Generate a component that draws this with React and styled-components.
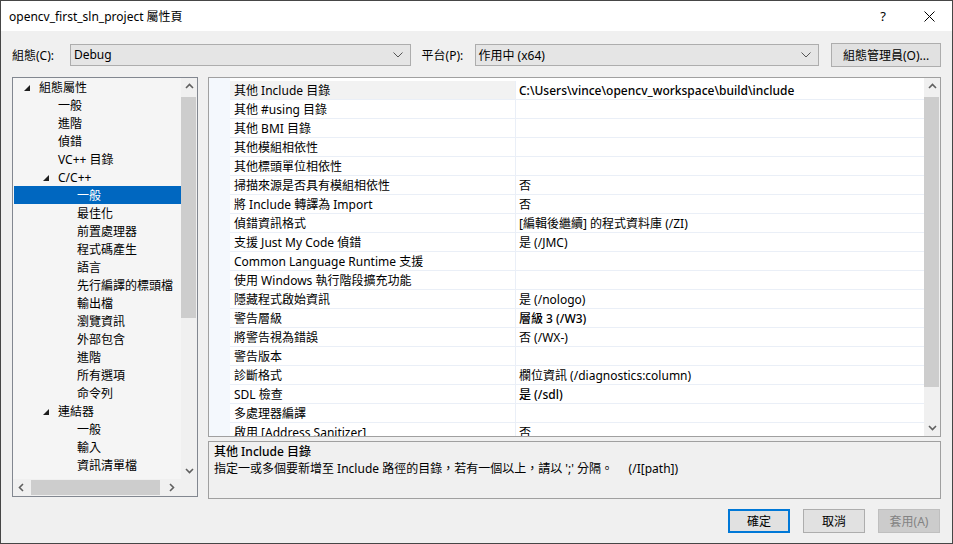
import React from 'react'
import styled, { createGlobalStyle } from 'styled-components'

const treeItems = [
  { label: '組態屬性', level: 0, expanded: true },
  { label: '一般', level: 1 },
  { label: '進階', level: 1 },
  { label: '偵錯', level: 1 },
  { label: 'VC++ 目錄', level: 1 },
  { label: 'C/C++', level: 1, expanded: true },
  { label: '一般', level: 2, selected: true },
  { label: '最佳化', level: 2 },
  { label: '前置處理器', level: 2 },
  { label: '程式碼產生', level: 2 },
  { label: '語言', level: 2 },
  { label: '先行編譯的標頭檔', level: 2 },
  { label: '輸出檔', level: 2 },
  { label: '瀏覽資訊', level: 2 },
  { label: '外部包含', level: 2 },
  { label: '進階', level: 2 },
  { label: '所有選項', level: 2 },
  { label: '命令列', level: 2 },
  { label: '連結器', level: 1, expanded: true },
  { label: '一般', level: 2 },
  { label: '輸入', level: 2 },
  { label: '資訊清單檔', level: 2 },
]

const properties = [
  { name: '其他 Include 目錄', value: 'C:\\Users\\vince\\opencv_workspace\\build\\include', bold: true, selected: true },
  { name: '其他 #using 目錄', value: '' },
  { name: '其他 BMI 目錄', value: '' },
  { name: '其他模組相依性', value: '' },
  { name: '其他標頭單位相依性', value: '' },
  { name: '掃描來源是否具有模組相依性', value: '否' },
  { name: '將 Include 轉譯為 Import', value: '否' },
  { name: '偵錯資訊格式', value: '[編輯後繼續] 的程式資料庫 (/ZI)' },
  { name: '支援 Just My Code 偵錯', value: '是 (/JMC)' },
  { name: 'Common Language Runtime 支援', value: '' },
  { name: '使用 Windows 執行階段擴充功能', value: '' },
  { name: '隱藏程式啟始資訊', value: '是 (/nologo)' },
  { name: '警告層級', value: '層級 3 (/W3)', bold: true },
  { name: '將警告視為錯誤', value: '否 (/WX-)' },
  { name: '警告版本', value: '' },
  { name: '診斷格式', value: '欄位資訊 (/diagnostics:column)' },
  { name: 'SDL 檢查', value: '是 (/sdl)', bold: true },
  { name: '多處理器編譯', value: '' },
  { name: '啟用 [Address Sanitizer]', value: '否' },
]

const rotation = { up: 0, right: 90, down: 180, left: 270 }

function Chevron({ dir }) {
  return (
    <svg width="9" height="9" viewBox="0 0 9 9" style={{ transform: `rotate(${rotation[dir]}deg)` }}>
      <polyline points="1,6 4.5,2.5 8,6" fill="none" stroke="#606060" strokeWidth="1.6" />
    </svg>
  )
}

function ScrollBar({ vertical, start, size }) {
  return (
    <ScrollTrack $vertical={vertical}>
      <ScrollArrow>
        <Chevron dir={vertical ? 'up' : 'left'} />
      </ScrollArrow>
      <ScrollThumb $vertical={vertical} $start={start} $size={size} />
      <ScrollRest />
      <ScrollArrow>
        <Chevron dir={vertical ? 'down' : 'right'} />
      </ScrollArrow>
    </ScrollTrack>
  )
}

function SelectBox({ width, value }) {
  return (
    <Select $width={width}>
      <span>{value}</span>
      <svg width="10" height="6" viewBox="0 0 10 6">
        <polyline points="0.5,0.5 5,5 9.5,0.5" fill="none" stroke="#555" strokeWidth="1" />
      </svg>
    </Select>
  )
}

function App() {
  return (
    <>
      <GlobalStyle />
      <Window>
        <TitleBar>
          <Title>opencv_first_sln_project 屬性頁</Title>
          <CaptionButton>?</CaptionButton>
          <CaptionButton>
            <svg width="11" height="11" viewBox="0 0 11 11">
              <path d="M0.5 0.5 L10.5 10.5 M10.5 0.5 L0.5 10.5" stroke="#000" strokeWidth="1" />
            </svg>
          </CaptionButton>
        </TitleBar>

        <Body>
          <Toolbar>
            <FieldLabel $width={58}>組態(C):</FieldLabel>
            <SelectBox width={341} value="Debug" />
            <FieldLabel $width={53} $gap={11}>平台(P):</FieldLabel>
            <SelectBox width={345} value="作用中 (x64)" />
            <Button $width={110} $gap={12}>組態管理員(O)...</Button>
          </Toolbar>

          <Main>
            <TreePanel>
              <TreeBody>
                <TreeList>
                  {treeItems.map((item, i) => (
                    <TreeRow key={i} $level={item.level} $selected={item.selected}>
                      <Expander>
                        {item.expanded && (
                          <svg width="6" height="6" viewBox="0 0 6 6">
                            <path d="M6 0 L6 6 L0 6 Z" fill="#1e1e1e" />
                          </svg>
                        )}
                      </Expander>
                      {item.label}
                    </TreeRow>
                  ))}
                </TreeList>
                <ScrollBar vertical start={19} size={221} />
              </TreeBody>
              <TreeFooter>
                <ScrollBar start={18} size={129} />
                <Corner />
              </TreeFooter>
            </TreePanel>

            <RightColumn>
              <Grid>
                <Gutter />
                <GridRows>
                  {properties.map((p, i) => (
                    <PropRow key={i}>
                      <PropName $selected={p.selected}>{p.name}</PropName>
                      <PropValue $bold={p.bold}>{p.value}</PropValue>
                    </PropRow>
                  ))}
                </GridRows>
                <ScrollBar vertical start={19} size={290} />
              </Grid>
              <Description>
                <DescTitle>其他 Include 目錄</DescTitle>
                <DescText>指定一或多個要新增至 Include 路徑的目錄，若有一個以上，請以 ';' 分隔。&nbsp;&nbsp;&nbsp;&nbsp;&nbsp;(/I[path])</DescText>
              </Description>
            </RightColumn>
          </Main>

          <Footer>
            <Button $width={62} $default>確定</Button>
            <Button $width={62}>取消</Button>
            <Button $width={62} disabled>套用(A)</Button>
          </Footer>
        </Body>
      </Window>
    </>
  )
}

export default App

const GlobalStyle = createGlobalStyle`
  html, body {
    margin: 0;
    padding: 0;
    background: #f0f0f0;
  }
  body {
    font-family: "Noto Sans", "Noto Sans CJK TC", sans-serif;
    font-size: 12px;
    color: #000;
  }
  * {
    box-sizing: border-box;
  }
`

const Window = styled.div`
  width: 953px;
  height: 544px;
  border: 1px solid #464646;
  background: #f0f0f0;
  display: flex;
  flex-direction: column;
  overflow: hidden;
`

const TitleBar = styled.div`
  height: 30px;
  background: #fff;
  display: flex;
  align-items: center;
  padding-left: 8px;
`

const Title = styled.div`
  flex: 1;
  font-size: 12px;
`

const CaptionButton = styled.div`
  width: 46px;
  height: 30px;
  display: flex;
  align-items: center;
  justify-content: center;
  font-size: 13px;
`

const Body = styled.div`
  flex: 1;
  display: flex;
  flex-direction: column;
  padding: 12px 11px 0 11px;
`

const Toolbar = styled.div`
  display: flex;
  align-items: center;
  height: 23px;
`

const FieldLabel = styled.div`
  width: ${p => p.$width}px;
  margin-left: ${p => p.$gap || 0}px;
  white-space: nowrap;
`

const Select = styled.div`
  width: ${p => p.$width}px;
  height: 22px;
  border: 1px solid #adadad;
  background: #e5e5e5;
  display: flex;
  align-items: center;
  justify-content: space-between;
  padding: 0 7px 0 3px;
`

const Button = styled.button`
  width: ${p => p.$width}px;
  height: 24px;
  margin-left: ${p => p.$gap || 0}px;
  font: inherit;
  color: #000;
  background: #e1e1e1;
  border: ${p => (p.$default ? '2px solid #0078d7' : '1px solid #adadad')};
  padding: 0;

  &:disabled {
    color: #838383;
    background: #cccccc;
    border-color: #bfbfbf;
  }
`

const Main = styled.div`
  display: flex;
  gap: 10px;
  margin-top: 11px;
`

const TreePanel = styled.div`
  width: 186px;
  height: 420px;
  border: 1px solid #828790;
  display: flex;
  flex-direction: column;
`

const TreeBody = styled.div`
  flex: 1;
  display: flex;
  min-height: 0;
`

const TreeList = styled.div`
  flex: 1;
  background: #f5f5f5;
  overflow: hidden;
`

const TreeRow = styled.div`
  height: 18px;
  display: flex;
  align-items: center;
  padding-left: ${p => 9 + p.$level * 19}px;
  margin-left: 1px;
  white-space: nowrap;
  background: ${p => (p.$selected ? '#0067c0' : 'transparent')};
  color: ${p => (p.$selected ? '#fff' : '#000')};
`

const Expander = styled.span`
  width: 16px;
  flex: 0 0 16px;
  display: flex;
  align-items: center;
  padding: 2px 0 0 1px;
`

const TreeFooter = styled.div`
  display: flex;
  height: 17px;
`

const Corner = styled.div`
  width: 17px;
  background: #f0f0f0;
`

const ScrollTrack = styled.div`
  display: flex;
  flex-direction: ${p => (p.$vertical ? 'column' : 'row')};
  background: #f0f0f0;
  ${p => (p.$vertical ? 'width: 16px; flex: 0 0 16px;' : 'height: 17px; flex: 1;')}
`

const ScrollArrow = styled.div`
  flex: 0 0 17px;
  display: flex;
  align-items: center;
  justify-content: center;
`

const ScrollThumb = styled.div`
  background: #cdcdcd;
  ${p =>
    p.$vertical
      ? `margin: ${p.$start - 17}px 1px 0 0; height: ${p.$size}px;`
      : `margin: 1px 0 1px ${p.$start - 17}px; width: ${p.$size}px;`}
`

const ScrollRest = styled.div`
  flex: 1;
`

const RightColumn = styled.div`
  width: 733px;
  display: flex;
  flex-direction: column;
`

const Grid = styled.div`
  height: 360px;
  border: 1px solid #a0a0a0;
  display: flex;
  background: #fff;
`

const Gutter = styled.div`
  width: 21px;
  background: #f4f8fd;
`

const GridRows = styled.div`
  flex: 1;
  padding-top: 3px;
  overflow: hidden;
`

const PropRow = styled.div`
  height: 19px;
  display: flex;
  border-bottom: 1px solid #eaeff7;
`

const PropName = styled.div`
  width: 286px;
  padding-left: 4px;
  display: flex;
  align-items: center;
  white-space: nowrap;
  border-right: 1px solid #eaeff7;
  background: ${p => (p.$selected ? '#f2f2f2' : '#fff')};
`

const PropValue = styled.div`
  flex: 1;
  padding-left: 3px;
  display: flex;
  align-items: center;
  white-space: nowrap;
  font-weight: ${p => (p.$bold ? 500 : 400)};
`

const Description = styled.div`
  margin-top: 4px;
  height: 58px;
  border: 1px solid #a0a0a0;
  padding: 1px 5px;
`

const DescTitle = styled.div`
  font-weight: 500;
  line-height: 17px;
`

const DescText = styled.div`
  line-height: 17px;
`

const Footer = styled.div`
  display: flex;
  justify-content: flex-end;
  gap: 13px;
  margin-top: 10px;
  padding-right: 1px;
`
